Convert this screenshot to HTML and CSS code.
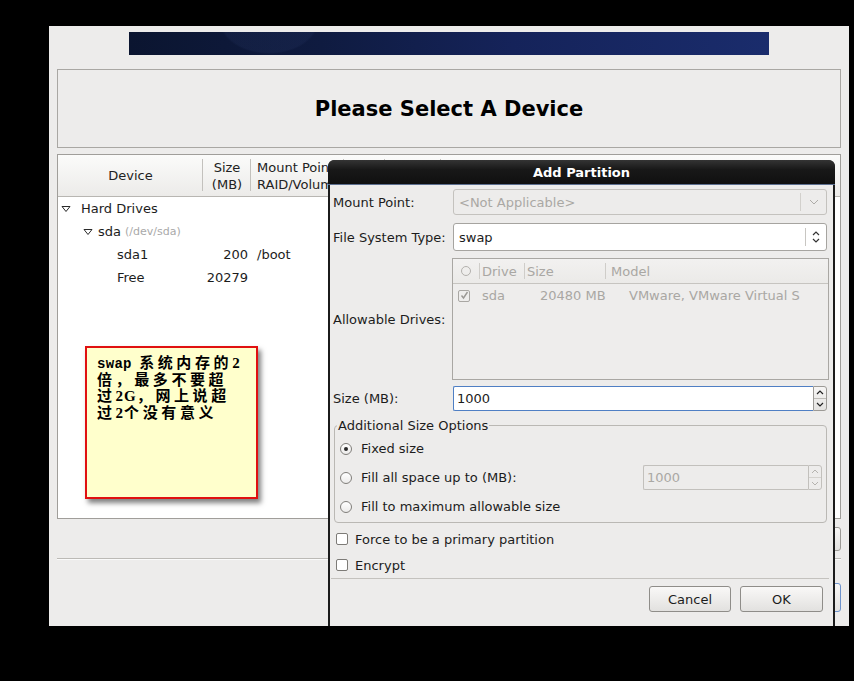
FILE: index.html
```html
<!DOCTYPE html>
<html>
<head>
<meta charset="utf-8">
<link rel="stylesheet" href="styles.css">
</head>
<body>
<div class="window">
  <div class="banner"></div>
  <div class="titlebox"><h1>Please Select A Device</h1></div>
  <div class="pane">
    <div class="thead">
      <div class="th c-dev center">Device</div>
      <div class="th c-size center">Size<br>(MB)</div>
      <div class="th c-mount">Mount Point/<br>RAID/Volume</div>
      <div class="th c-type">Type</div>
      <div class="th c-fmt">Format</div>
      <div class="th c-rest"></div>
    </div>
    <div class="tree">
      <div class="row"><div class="tdev lvl0"><svg class="tri" width="10" height="8" viewBox="0 0 10 8"><path d="M1 1.5h8l-4 5z" fill="none" stroke="#2a2a2a"/></svg>Hard Drives</div></div>
      <div class="row"><div class="tdev lvl1"><svg class="tri" width="10" height="8" viewBox="0 0 10 8"><path d="M1 1.5h8l-4 5z" fill="none" stroke="#2a2a2a"/></svg>sda<span class="dim">(/dev/sda)</span></div></div>
      <div class="row"><div class="tdev lvl2">sda1</div><div class="tsize">200</div><div class="tmount">/boot</div></div>
      <div class="row"><div class="tdev lvl2">Free</div><div class="tsize">20279</div><div class="tmount"></div></div>
    </div>
  </div>
  <div class="wrow1"><span class="wbtn"></span></div>
  <div class="wsep"></div>
  <div class="wrow2"><span class="wbtn focus"></span></div>

  <div class="note">
    <div class="ln"><span class="latin">swap</span> 系统内存的<span class="num">2</span></div>
    <div class="ln">倍，最多不要超</div>
    <div class="ln">过<span class="num">2G</span>，网上说超</div>
    <div class="ln">过<span class="num">2</span>个没有意义</div>
  </div>

  <div class="dialog">
    <div class="dtitle">Add Partition</div>
    <div class="dbody">
      <div class="frow r1">
        <div class="lbl">Mount Point:</div>
        <div class="combo disabled">
          <span class="ctext">&lt;Not Applicable&gt;</span>
          <span class="cbtn"><svg width="10" height="6" viewBox="0 0 10 6"><path d="M1 1l4 4 4-4" fill="none" stroke="#aeaca8" stroke-width="1"/></svg></span>
        </div>
      </div>
      <div class="frow r2">
        <div class="lbl">File System Type:</div>
        <div class="combo">
          <span class="ctext">swap</span>
          <span class="cbtn two"><svg width="8" height="14" viewBox="0 0 8 14"><path d="M1 5l3-3 3 3M1 9l3 3 3-3" fill="none" stroke="#333" stroke-width="1.2"/></svg></span>
        </div>
      </div>
      <div class="frow r3">
        <div class="lbl">Allowable Drives:</div>
        <div class="drives">
          <div class="dhead">
            <div class="dc dc-chk"><span class="circ"></span></div>
            <div class="dc dc-drv">Drive</div>
            <div class="dc dc-size">Size</div>
            <div class="dc dc-model">Model</div>
          </div>
          <div class="drow">
            <div class="dd dd-chk"><span class="dchk"><svg width="9" height="9" viewBox="0 0 9 9"><path d="M1.5 4.5l2 2.5 4-6" fill="none" stroke="#9a9894" stroke-width="1.4"/></svg></span></div>
            <div class="dd dd-drv">sda</div>
            <div class="dd dd-size">20480 MB</div>
            <div class="dd dd-model">VMware, VMware Virtual S</div>
          </div>
        </div>
      </div>
      <div class="frow r4">
        <div class="lbl">Size (MB):</div>
        <div class="spin focus">
          <span class="stext">1000</span>
          <span class="sbtns">
            <span class="sb"><svg width="8" height="5" viewBox="0 0 8 5"><path d="M1 4l3-3 3 3" fill="none" stroke="#222" stroke-width="1.2"/></svg></span>
            <span class="sb"><svg width="8" height="5" viewBox="0 0 8 5"><path d="M1 1l3 3 3-3" fill="none" stroke="#222" stroke-width="1.2"/></svg></span>
          </span>
        </div>
      </div>
      <fieldset class="frame">
        <legend>Additional Size Options</legend>
        <div class="opt"><span class="radio on"></span>Fixed size</div>
        <div class="opt"><span class="radio"></span>Fill all space up to (MB):
          <div class="spin small disabled">
            <span class="stext">1000</span>
            <span class="sbtns">
              <span class="sb"><svg width="8" height="5" viewBox="0 0 8 5"><path d="M1 4l3-3 3 3" fill="none" stroke="#b5b3af" stroke-width="1"/></svg></span>
              <span class="sb"><svg width="8" height="5" viewBox="0 0 8 5"><path d="M1 1l3 3 3-3" fill="none" stroke="#b5b3af" stroke-width="1"/></svg></span>
            </span>
          </div>
        </div>
        <div class="opt"><span class="radio"></span>Fill to maximum allowable size</div>
      </fieldset>
      <div class="chk c1"><span class="box"></span>Force to be a primary partition</div>
      <div class="chk"><span class="box"></span>Encrypt</div>
      <div class="dsep"></div>
      <div class="dbtns">
        <button class="btn cancel">Cancel</button>
        <button class="btn ok">OK</button>
      </div>
    </div>
  </div>
</div>
</body>
</html>
```
FILE: styles.css
```css
html, body {
  margin: 0;
  padding: 0;
}
body {
  background: #000;
  width: 854px;
  height: 681px;
  overflow: hidden;
  font-family: "DejaVu Sans", sans-serif;
  font-size: 13px;
  color: #1c1c1c;
}
.window {
  position: relative;
  width: 800px;
  height: 600px;
  margin: 26px 0 0 49px;
  background: #edeceb;
  padding: 6px 8px 0;
  box-sizing: border-box;
  overflow: hidden;
}
.banner {
  width: 640px;
  height: 23px;
  margin: 0 auto;
  background:
    radial-gradient(ellipse 50px 34px at 140px -12px, rgba(70,90,150,0.10) 0 95%, transparent 100%),
    linear-gradient(90deg, #0b1530 0%, #0f1b40 30%, #15235a 60%, #1a2c6c 100%);
}
.titlebox {
  margin-top: 14px;
  height: 79px;
  box-sizing: border-box;
  border: 1px solid #a9a7a3;
  display: flex;
  align-items: center;
  justify-content: center;
}
.titlebox h1 {
  margin: 0;
  font-size: 21px;
  font-weight: bold;
  color: #000;
}
.pane {
  margin-top: 6px;
  height: 365px;
  box-sizing: border-box;
  border: 1px solid #a09e9a;
  background: #fff;
}
.thead {
  display: flex;
  height: 42px;
  box-sizing: border-box;
  border-bottom: 1px solid #b8b6b2;
  background: linear-gradient(#fbfbfa, #ecebe9);
}
.th {
  position: relative;
  display: flex;
  align-items: center;
  line-height: 17px;
  color: #222;
}
.th.center { justify-content: center; text-align: center; }
.th::after {
  content: "";
  position: absolute;
  right: 0;
  top: 4px;
  bottom: 5px;
  width: 1px;
  background: #c3c1bd;
}
.c-dev { width: 145px; }
.c-size { width: 48px; }
.c-mount { width: 93px; padding-left: 6px; box-sizing: border-box; white-space: nowrap; overflow: hidden; }
.c-type { width: 41px; padding-left: 6px; box-sizing: border-box; overflow: hidden; }
.c-fmt { width: 56px; padding-left: 6px; box-sizing: border-box; overflow: hidden; }
.c-rest { flex: 1; }
.c-rest::after { display: none; }
.row {
  height: 23px;
  display: flex;
  align-items: center;
}
.tdev {
  width: 145px;
  display: flex;
  align-items: center;
  box-sizing: border-box;
  white-space: nowrap;
}
.lvl0 { padding-left: 3px; }
.lvl0 .tri { margin-right: 10px; }
.lvl1 { padding-left: 25px; }
.lvl1 .tri { margin-right: 5px; }
.lvl2 { padding-left: 59px; }
.dim { color: #a9a9a9; font-size: 11px; margin-left: 4px; }
.tsize { width: 48px; padding-right: 3px; box-sizing: border-box; text-align: right; }
.tmount { padding-left: 6px; }

.wrow1 {
  display: flex;
  justify-content: flex-end;
  margin-top: 8px;
}
.wsep {
  margin-top: 7px;
  height: 1px;
  background: #bcbab6;
  border-bottom: 1px solid #fafafa;
}
.wrow2 {
  display: flex;
  justify-content: flex-end;
  margin-top: 23px;
}
.wbtn {
  display: block;
  width: 90px;
  height: 24px;
  box-sizing: border-box;
  border: 1px solid #9c9a96;
  border-radius: 3px;
  background: linear-gradient(#f8f7f6, #e3e2e0);
}
.wbtn.focus { height: 29px; border-color: #6e93cc; }

.note {
  position: absolute;
  left: 36px;
  top: 320px;
  width: 173px;
  height: 153px;
  box-sizing: border-box;
  border: 2px solid #e01010;
  background: #ffffcc;
  box-shadow: 3px 4px 5px rgba(0,0,0,0.5);
  padding: 7px 0 0 10px;
}
.ln {
  height: 16.7px;
  font: bold 15px/16px "Liberation Serif", "Noto Sans CJK SC", serif;
  letter-spacing: 3.6px;
  color: #000;
  white-space: nowrap;
}
.ln .latin {
  font-family: "Liberation Mono", "Noto Sans CJK SC", monospace;
  font-size: 14px;
  line-height: 1;
  letter-spacing: 0.3px;
}
.ln .num {
  font-size: 15px;
  line-height: 1;
  letter-spacing: 1px;
}

.dialog {
  position: absolute;
  left: 279px;
  top: 134px;
  width: 507px;
  height: 470px;
  box-sizing: border-box;
  border: 2px solid #1b1b1b;
  border-bottom: none;
  border-radius: 7px 7px 0 0;
  background: #edeceb;
}
.dtitle {
  height: 22px;
  margin: -2px -2px 0;
  padding-top: 2px;
  border-radius: 6px 6px 0 0;
  background: linear-gradient(#343434, #181818 40%, #101010);
  border-bottom: 1px solid #5d6f8f;
  color: #fff;
  font-weight: bold;
  text-align: center;
  line-height: 22px;
}
.dbody {
  padding: 4px 6px 0 3px;
}
.frow {
  display: flex;
  align-items: center;
}
.lbl { width: 120px; flex: none; white-space: nowrap; }
.r1 { height: 26px; }
.r2 { height: 28px; margin-top: 8px; }
.r3 { height: 122px; margin-top: 7px; }
.r4 { height: 25px; margin-top: 6px; }

.combo {
  flex: 1;
  height: 100%;
  box-sizing: border-box;
  border: 1px solid #a6a4a0;
  border-radius: 3px;
  background: #fff;
  display: flex;
  align-items: center;
}
.combo.disabled {
  background: #edeceb;
  border-color: #c4c2be;
  color: #aaa8a4;
}
.ctext { flex: 1; padding-left: 5px; }
.cbtn {
  width: 25px;
  height: 18px;
  border-left: 1px solid #d2d0cc;
  display: flex;
  align-items: center;
  justify-content: center;
}
.cbtn.two { width: 20px; border-left-color: #c8c6c2; }

.drives {
  flex: 1;
  height: 100%;
  margin-left: -1px;
  margin-right: -2px;
  box-sizing: border-box;
  border: 1px solid #a9a7a3;
  background: #eeedec;
  color: #a9a7a3;
}
.dhead {
  display: flex;
  height: 25px;
  box-sizing: border-box;
  border-bottom: 1px solid #c6c4c0;
  background: linear-gradient(#f2f1f0, #ebeae8);
}
.dc {
  position: relative;
  display: flex;
  align-items: center;
  box-sizing: border-box;
}
.dc::after {
  content: "";
  position: absolute;
  right: 0;
  top: 4px;
  bottom: 4px;
  width: 1px;
  background: #cfcdc9;
}
.dc-chk { width: 27px; padding-left: 8px; }
.dc-drv { width: 45px; padding-left: 2px; }
.dc-size { width: 81px; padding-left: 2px; }
.dc-model { flex: 1; padding-left: 5px; }
.dc-model::after { display: none; }
.circ {
  width: 8px;
  height: 8px;
  border: 1px solid #b3b1ad;
  border-radius: 50%;
}
.drow {
  display: flex;
  height: 23px;
  align-items: center;
}
.dd { box-sizing: border-box; white-space: nowrap; }
.dd-chk { width: 27px; padding-left: 5px; display: flex; }
.dchk {
  width: 12px;
  height: 12px;
  box-sizing: border-box;
  border: 1px solid #a9a7a3;
  border-radius: 2px;
  display: flex;
  align-items: center;
  justify-content: center;
}
.dd-drv { width: 45px; padding-left: 2px; }
.dd-size { width: 81px; padding-left: 15px; }
.dd-model { padding-left: 23px; overflow: hidden; }

.spin {
  flex: 1;
  height: 100%;
  display: flex;
  box-sizing: border-box;
}
.spin .stext {
  flex: 1;
  display: flex;
  align-items: center;
  padding-left: 3px;
  box-sizing: border-box;
  border: 1px solid #4f7fc4;
  border-right: none;
  border-radius: 2px 0 0 2px;
  background: #fff;
}
.sbtns {
  width: 14px;
  display: flex;
  flex-direction: column;
  box-sizing: border-box;
  border: 1px solid #9c9a96;
  border-radius: 0 3px 3px 0;
  background: linear-gradient(#f6f5f4, #e4e3e1);
}
.sb {
  flex: 1;
  display: flex;
  align-items: center;
  justify-content: center;
}
.sb + .sb { border-top: 1px solid #bdbbb7; }
.spin.small {
  flex: none;
  width: 179px;
  height: 25px;
  margin-left: auto;
  margin-right: 4px;
}
.spin.disabled .stext {
  border-color: #c2c0bc;
  background: #edeceb;
  color: #aaa8a4;
}
.spin.disabled .sbtns {
  border-color: #c2c0bc;
  background: #edeceb;
}
.spin.disabled .sb + .sb { border-top-color: #d4d2ce; }

.frame {
  margin: 7px 0 0 1px;
  padding: 1px 0 1px 0;
  border: 1px solid #bab8b4;
  border-radius: 4px;
  min-width: 0;
}
.frame legend {
  padding: 0 1px;
  margin-left: 2px;
  line-height: 15px;
}
.opt {
  height: 29px;
  display: flex;
  align-items: center;
  padding-left: 5px;
  white-space: nowrap;
}
.radio {
  position: relative;
  width: 12px;
  height: 12px;
  box-sizing: border-box;
  border: 1px solid #807e7a;
  border-radius: 50%;
  background: linear-gradient(#ffffff, #ecebea);
  margin-right: 9px;
  flex: none;
}
.radio.on::after {
  content: "";
  position: absolute;
  left: 3px;
  top: 3px;
  width: 4px;
  height: 4px;
  border-radius: 50%;
  background: #2a2a2a;
}
.chk {
  height: 26px;
  display: flex;
  align-items: center;
  padding-left: 3px;
}
.chk.c1 { margin-top: 3px; }
.box {
  width: 12px;
  height: 12px;
  box-sizing: border-box;
  border: 1px solid #7d7b77;
  border-radius: 2px;
  background: #fff;
  margin-right: 7px;
}
.dsep {
  height: 1px;
  margin: 0 -2px 0 -2px;
  background: #c4c2be;
}
.dbtns {
  display: flex;
  justify-content: flex-end;
  gap: 9px;
  margin-top: 7px;
  padding-right: 4px;
}
.btn {
  height: 26px;
  border: 1px solid #8f8d89;
  border-radius: 3px;
  background: linear-gradient(#f9f8f7, #e2e1df);
  font: 13px "DejaVu Sans", sans-serif;
  color: #1c1c1c;
  padding: 0;
}
.btn.cancel { width: 82px; }
.btn.ok { width: 83px; }
```
